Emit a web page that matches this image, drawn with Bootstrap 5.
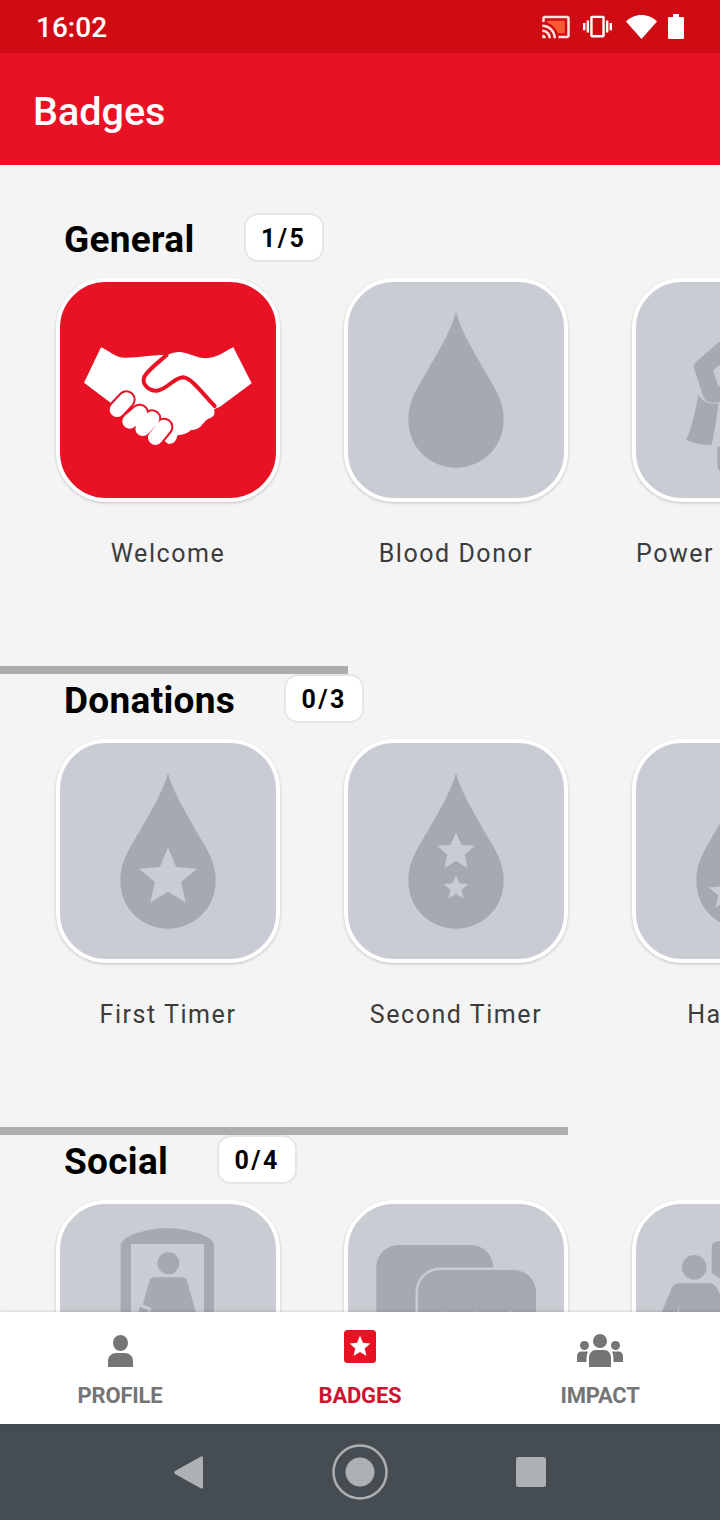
<!DOCTYPE html>
<html lang="en">
<head>
  <meta charset="UTF-8">
  <meta name="viewport" content="width=device-width, initial-scale=1.0">
  <title>Badges</title>
  <link href="https://cdn.jsdelivr.net/npm/bootstrap@5.3.0/dist/css/bootstrap.min.css" rel="stylesheet">
  <style>
    html, body {
      height: 100%;
    }
    body {
      font-family: Roboto, "Liberation Sans", sans-serif;
      background: #f4f4f4;
    }
    .app-screen {
      width: 720px;
      height: 1520px;
    }
    .status-strip {
      height: 53px;
      padding: 0 36px 0 36px;
      background: #cf0c14;
      color: #fff;
      font-size: 28px;
      font-weight: 500;
    }
    .status-time {
      padding-top: 3px;
    }
    .status-icons svg {
      display: block;
    }
    .status-icons .cast-ic { margin-right: 12px; }
    .status-icons .vib-ic { margin-right: 14px; }
    .status-icons .wifi-ic { margin-right: 11px; }
    .app-bar {
      height: 112px;
      padding: 5px 33px 0;
      background: #e81224;
    }
    .app-bar .navbar-brand {
      margin: 0;
      padding: 0;
      color: #fff;
      font-size: 39.500px;
      font-weight: 500;
      line-height: 1;
    }
    .badge-scroll {
      padding-top: 49px;
      background: #f4f4f4;
    }
    .sec-rule {
      height: 8px;
      margin-bottom: 1px;
      background: #adadad;
    }
    .sec-rule-short { width: 348px; }
    .sec-rule-long { width: 568px; }
    .sec-head {
      height: 47px;
      padding-left: 64px;
      margin-bottom: 17px;
    }
    .sec-title {
      margin: 3px 49px 0 0;
      color: #000;
      font-size: 37px;
      font-weight: 700;
      line-height: 47px;
      letter-spacing: .3px;
    }
    .count-chip {
      width: 80px;
      height: 49px;
      padding-top: 3px;
      background: #fff;
      border: 2px solid #e6e6e6;
      border-radius: 14px;
      color: #000;
      font-size: 25px;
      font-weight: 700;
      letter-spacing: 2.400px;
    }
    .tile-row {
      gap: 64px;
      padding-left: 56px;
      padding-bottom: 97px;
    }
    .tile-cell {
      flex: 0 0 224px;
      width: 224px;
    }
    .badge-tile {
      width: 224px;
      height: 224px;
      overflow: hidden;
      background: #c9ccd2;
      border: 4px solid #fff;
      border-radius: 50px;
      box-shadow: 0 1px 3px rgba(0, 0, 0, .22);
    }
    .badge-tile svg {
      display: block;
      width: 216px;
      height: 216px;
    }
    .badge-tile.earned {
      background: #e81224;
    }
    .tile-label {
      margin-top: 37px;
      color: #3c3c3c;
      font-size: 25px;
      line-height: 30px;
      letter-spacing: 1.550px;
      white-space: nowrap;
    }
    .shade {
      fill: #a5a9b2;
    }
    .tint {
      fill: #c9ccd2;
    }
    .bottom-tabs {
      position: relative;
      height: 112px;
      background: #fff;
      box-shadow: 0 -1px 3px rgba(0, 0, 0, .12);
    }
    .tab-item {
      padding-top: 18px;
      color: #757575;
      fill: #757575;
      font-size: 22px;
      font-weight: 700;
      line-height: 26px;
      letter-spacing: -.2px;
      text-decoration: none;
    }
    .tab-item.active {
      color: #cf1230;
    }
    .tab-ic {
      height: 37px;
      margin-bottom: 16px;
    }
    .tab-ic .badge-ic {
      margin-bottom: 4px;
    }
    .system-bar {
      height: 96px;
      padding-right: 1px;
      background: #454c52;
    }
    .sys-btn {
      width: 171px;
    }
    .sys-btn svg {
      display: block;
      margin: 0 auto;
    }
  </style>
</head>
<body>
  <div class="app-screen d-flex flex-column overflow-hidden">

    <!-- status bar -->
    <div class="status-strip d-flex align-items-center justify-content-between flex-shrink-0">
      <span class="status-time">16:02</span>
      <div class="status-icons d-flex align-items-center">
        <svg class="cast-ic" width="30" height="30" viewBox="0 0 24 24">
          <path fill="#ff5a36" d="M19 7H5v1.63c3.96 1.28 7.09 4.41 8.37 8.37H19V7z"/>
          <path fill="#ffe3dc" d="M1 18v3h3c0-1.66-1.34-3-3-3zm0-4v2c2.76 0 5 2.24 5 5h2c0-3.87-3.13-7-7-7zm0-4v2c4.97 0 9 4.03 9 9h2c0-6.08-4.93-11-11-11zm20-7H3c-1.1 0-2 .9-2 2v3h2V5h18v14h-7v2h7c1.1 0 2-.9 2-2V5c0-1.1-.9-2-2-2z"/>
        </svg>
        <svg class="vib-ic" width="29" height="29" viewBox="0 0 24 24" fill="#fff">
          <path d="M0 15h2V9H0v6zm3 2h2V7H3v10zm19-8v6h2V9h-2zm-3 8h2V7h-2v10zM16.5 3h-9C6.67 3 6 3.67 6 4.5v15c0 .83.67 1.5 1.5 1.5h9c.83 0 1.5-.67 1.5-1.5v-15c0-.83-.67-1.5-1.5-1.5zM16 19H8V5h8v14z"/>
        </svg>
        <svg class="wifi-ic" width="31" height="24" viewBox="0 0 31 24" fill="#fff">
          <path d="M0 6.500C4 2.500 9.500 0 15.500 0S27 2.500 31 6.500L15.500 24z"/>
        </svg>
        <svg width="16" height="25" viewBox="0 0 16 25" fill="#fff">
          <path d="M5 0h6v3h3.500c.8 0 1.500.7 1.500 1.500v19c0 .8-.7 1.500-1.500 1.500h-13C.7 25 0 24.300 0 23.500v-19C0 3.700.7 3 1.500 3H5z"/>
        </svg>
      </div>
    </div>

    <!-- app bar -->
    <nav class="navbar app-bar flex-shrink-0">
      <span class="navbar-brand">Badges</span>
    </nav>

    <!-- shared shapes for the badge artwork, 648 units to a tile -->
    <svg width="0" height="0" class="position-absolute">
      <defs>
        <path id="drop" d="M324 89C340 150 380 214 430 300C455 343 467 372 467 414C467 495 403 557 324 557C245 557 181 495 181 414C181 372 193 343 218 300C268 214 308 150 324 89Z"/>
        <polygon id="star" points="0,-1 .265,-.364 .951,-.309 .428,.139 .588,.809 0,.45 -.588,.809 -.428,.139 -.951,-.309 -.265,-.364"/>
      </defs>
    </svg>

    <main class="badge-scroll flex-grow-1 overflow-hidden">

      <!-- General -->
      <section>
        <div class="sec-head d-flex align-items-center">
          <h2 class="sec-title">General</h2>
          <span class="count-chip d-flex align-items-center justify-content-center flex-shrink-0">1/5</span>
        </div>
        <div class="tile-row d-flex overflow-hidden">
          <div class="tile-cell">
            <div class="badge-tile earned">
              <svg viewBox="60 36 648 648">
                <path fill="#fff" d="M183 232C205 240 222 262 252 263C295 264 340 254 378 255C392 250 408 245 422 246C450 250 470 264 498 265C530 264 555 244 580 232L635 340L540 410L522 418C526 432 522 442 505 446C497 450 492 458 488 462C480 474 468 480 452 480C444 490 428 494 412 496C410 510 404 522 385 522L370 510L300 440L212 398L132 338Z"/>
                <g fill="none" stroke-linecap="round">
                  <path stroke="#e81224" stroke-width="12" stroke-linejoin="round" d="M380 255C352 280 326 298 313 320C304 342 326 364 352 362C382 358 402 322 430 322C458 326 490 374 524 408"/>
                  <path stroke="#e81224" stroke-width="56" d="M231 419L259 389M269 454L299 429M308 476L336 446M346 503L372 471"/>
                  <path stroke="#fff" stroke-width="44" d="M231 419L259 389M269 454L299 429M308 476L336 446M346 503L372 471"/>
                </g>
              </svg>
            </div>
            <div class="tile-label text-center">Welcome</div>
          </div>
          <div class="tile-cell">
            <div class="badge-tile">
              <svg viewBox="0 0 648 648"><use href="#drop" class="shade"/></svg>
            </div>
            <div class="tile-label text-center">Blood Donor</div>
          </div>
          <div class="tile-cell">
            <div class="badge-tile">
              <svg viewBox="0 0 648 648">
                <path class="shade" d="M187 339C178 390 168 435 150 474C175 484 200 490 227 489C236 450 242 410 247 364C225 368 200 360 187 339Z"/>
                <path class="shade" d="M300 136L182 238C174 245 172 254 175 262L202 344C210 362 232 366 262 358L330 340V136Z"/>
                <path class="tint" d="M232 264L250 250L300 262V320L246 312Z"/>
                <path class="shade" d="M244 494H300V570H262C250 570 244 562 244 550Z"/>
              </svg>
            </div>
            <div class="tile-label text-center">Power Red Donor</div>
          </div>
        </div>
      </section>

      <!-- Donations -->
      <section>
        <div class="sec-rule sec-rule-short"></div>
        <div class="sec-head d-flex align-items-center">
          <h2 class="sec-title">Donations</h2>
          <span class="count-chip d-flex align-items-center justify-content-center flex-shrink-0">0/3</span>
        </div>
        <div class="tile-row d-flex overflow-hidden">
          <div class="tile-cell">
            <div class="badge-tile">
              <svg viewBox="0 0 648 648">
                <use href="#drop" class="shade"/>
                <use href="#star" class="tint" transform="translate(324 405) scale(91)"/>
              </svg>
            </div>
            <div class="tile-label text-center">First Timer</div>
          </div>
          <div class="tile-cell">
            <div class="badge-tile">
              <svg viewBox="0 0 648 648">
                <use href="#drop" class="shade"/>
                <use href="#star" class="tint" transform="translate(324 327) scale(60)"/>
                <use href="#star" class="tint" transform="translate(324 435) scale(39)"/>
              </svg>
            </div>
            <div class="tile-label text-center">Second Timer</div>
          </div>
          <div class="tile-cell">
            <div class="badge-tile">
              <svg viewBox="0 0 648 648">
                <use href="#drop" class="shade"/>
                <use href="#star" class="tint" transform="translate(270 450) scale(54)"/>
              </svg>
            </div>
            <div class="tile-label text-center">Hat Trick</div>
          </div>
        </div>
      </section>

      <!-- Social: the tab bar covers the lower part of this row -->
      <section>
        <div class="sec-rule sec-rule-long"></div>
        <div class="sec-head d-flex align-items-center">
          <h2 class="sec-title">Social</h2>
          <span class="count-chip d-flex align-items-center justify-content-center flex-shrink-0">0/4</span>
        </div>
        <div class="tile-row d-flex overflow-hidden">
          <div class="tile-cell">
            <div class="badge-tile">
              <svg viewBox="0 0 648 648">
                <path class="shade" d="M182 125C182 96 260 73 322 73C384 73 462 96 462 125V600H182Z"/>
                <rect class="tint" x="213" y="120" width="219" height="440"/>
                <circle class="shade" cx="325" cy="178" r="33"/>
                <path class="shade" d="M282 220H368C374 220 379 224 381 231L412 340H238L268 231C270 224 275 220 282 220Z"/>
                <path class="tint" d="M236 296L274 312L266 340H226Z"/>
                <path class="shade" d="M240 308L266 318L260 340H232Z"/>
              </svg>
            </div>
          </div>
          <div class="tile-cell">
            <div class="badge-tile">
              <svg viewBox="0 0 648 648">
                <rect class="shade" x="85" y="123" width="350" height="300" rx="66"/>
                <rect class="shade" x="210" y="198" width="354" height="300" rx="66" stroke="#c9ccd2" stroke-width="15" paint-order="stroke"/>
                <circle class="tint" cx="285" cy="336" r="14"/>
                <circle class="tint" cx="387" cy="336" r="14"/>
                <circle class="tint" cx="486" cy="336" r="14"/>
              </svg>
            </div>
          </div>
          <div class="tile-cell">
            <div class="badge-tile">
              <svg viewBox="0 0 648 648">
                <circle class="shade" cx="175" cy="190" r="37"/>
                <path class="shade" d="M130 238H222C232 238 238 246 246 258L290 340H132L127 308L122 340H70L105 258C110 244 118 238 130 238Z"/>
                <path class="shade" d="M227 130C227 118 236 112 246 112H300V260L262 232L227 206Z"/>
              </svg>
            </div>
          </div>
        </div>
      </section>
    </main>

    <!-- bottom tabs -->
    <nav class="nav nav-justified bottom-tabs flex-shrink-0">
      <a class="nav-item tab-item d-flex flex-column align-items-center" href="#">
        <div class="tab-ic d-flex align-items-end">
          <svg width="25" height="32" viewBox="0 0 25 32">
            <ellipse cx="12.500" cy="8" rx="7.500" ry="8"/>
            <path d="M0 32V26C0 21 4 18 8 18H17C21 18 25 21 25 26V32Z"/>
          </svg>
        </div>
        PROFILE
      </a>
      <a class="nav-item tab-item active d-flex flex-column align-items-center" href="#">
        <div class="tab-ic d-flex align-items-end">
          <svg class="badge-ic" width="32" height="33" viewBox="0 0 32 33">
            <rect width="32" height="33" rx="3.500" fill="#e81224"/>
            <polygon fill="#fff" points="16,5.500 18.900,12.800 26.500,13.400 20.700,18.400 22.500,26 16,21.900 9.500,26 11.300,18.400 5.500,13.400 13.100,12.800"/>
          </svg>
        </div>
        BADGES
      </a>
      <a class="nav-item tab-item d-flex flex-column align-items-center" href="#">
        <div class="tab-ic d-flex align-items-end">
          <svg width="46" height="33" viewBox="0 0 46 33">
            <circle cx="7.500" cy="11.500" r="4.500"/>
            <circle cx="38.500" cy="11.500" r="4.500"/>
            <circle cx="23" cy="7" r="7"/>
            <path d="M0 28V22C0 19 2 17.500 4.500 17.500H10C10.800 17.500 11 18 10.500 19C9.700 21 9.500 23 9.500 28Z"/>
            <path d="M46 28V22C46 19 44 17.500 41.500 17.500H36C35.200 17.500 35 18 35.500 19C36.300 21 36.500 23 36.500 28Z"/>
            <path d="M12 33V24C12 19 15 16 19 16H27C31 16 34 19 34 24V33Z"/>
          </svg>
        </div>
        IMPACT
      </a>
    </nav>

    <!-- system navigation -->
    <div class="system-bar d-flex align-items-center justify-content-center flex-shrink-0">
      <div class="sys-btn">
        <svg width="29" height="33" viewBox="0 0 29 33">
          <path fill="#adb1b3" d="M27 .500C28 0 29 .700 29 2V31C29 32.300 28 33 27 32.500L1 18C0 17.300 0 15.700 1 15Z"/>
        </svg>
      </div>
      <div class="sys-btn">
        <svg width="56" height="56" viewBox="0 0 56 56">
          <circle cx="28" cy="28" r="26.500" fill="none" stroke="#adb1b3" stroke-width="2.500"/>
          <circle cx="28" cy="28" r="14.500" fill="#adb1b3"/>
        </svg>
      </div>
      <div class="sys-btn">
        <svg width="30" height="30" viewBox="0 0 30 30">
          <rect width="30" height="30" rx="2.500" fill="#adb1b3"/>
        </svg>
      </div>
    </div>
  </div>

  <script src="https://cdn.jsdelivr.net/npm/bootstrap@5.3.0/dist/js/bootstrap.bundle.min.js"></script>
</body>
</html>
